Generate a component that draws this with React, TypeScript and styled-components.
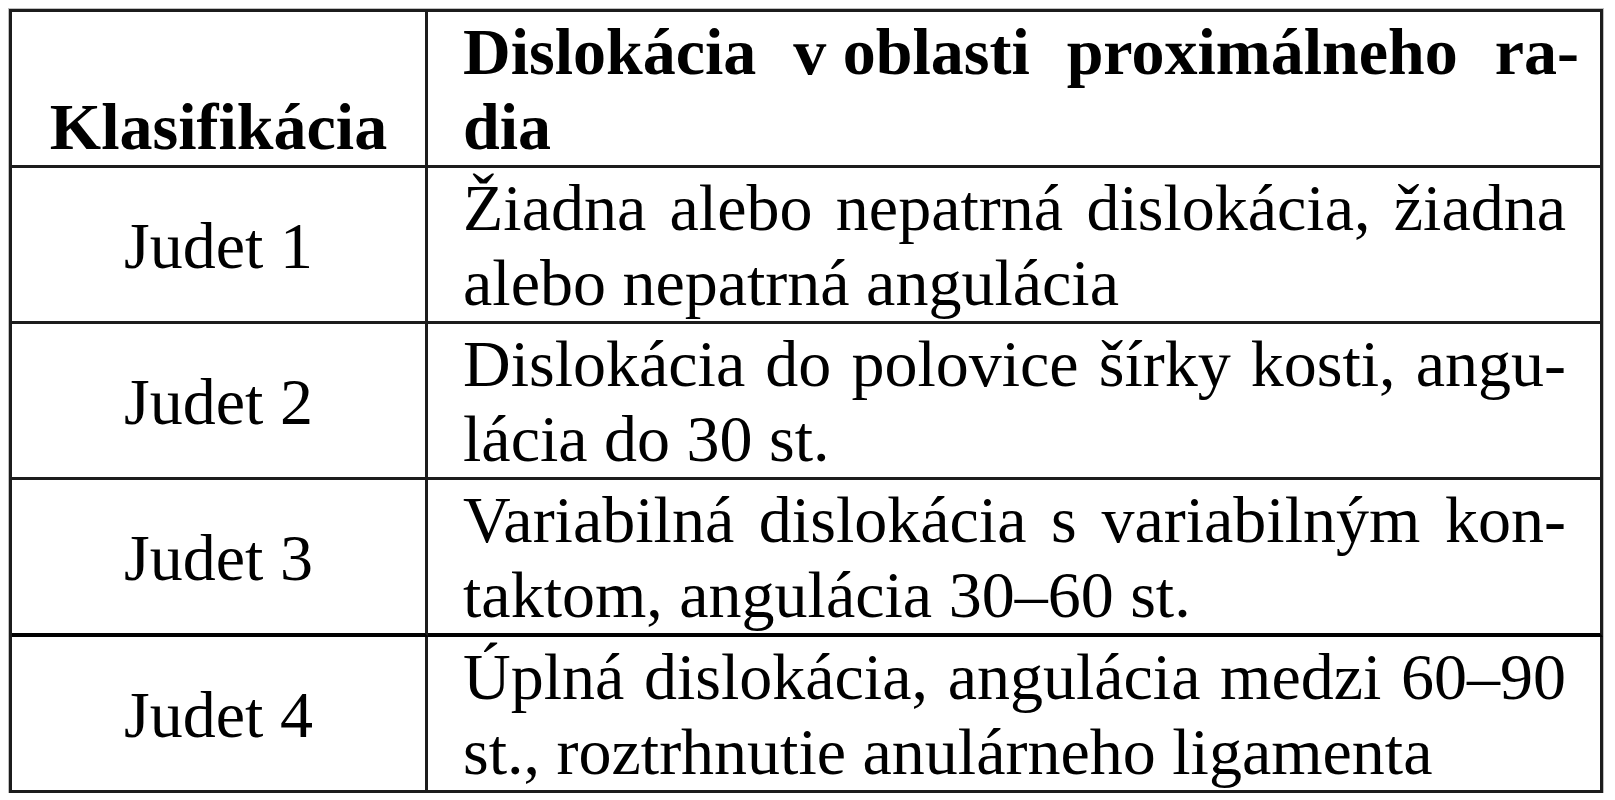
import React from 'react';
import styled, { createGlobalStyle } from 'styled-components';

const GlobalStyle = createGlobalStyle`
  html, body {
    margin: 0;
    padding: 0;
    background: #ffffff;
  }

  body {
    font-family: "Liberation Serif", "Times New Roman", serif;
    color: #000000;
  }
`;

// each line of the right column is given as its words; a line that is
// stretched to the full width is marked with justify
type Line = { words: string[]; justify?: boolean; overhang?: number };

const header: Line[] = [
  { words: ['Dislokácia', 'v oblasti', 'proximálneho', 'ra-'], justify: true, overhang: 13 },
  { words: ['dia'] },
];

const rows: Array<{
  label: string;
  lines: Line[];
}> = [
  {
    label: 'Judet 1',
    lines: [
      { words: ['Žiadna', 'alebo', 'nepatrná', 'dislokácia,', 'žiadna'], justify: true },
      { words: ['alebo nepatrná angulácia'] },
    ],
  },
  {
    label: 'Judet 2',
    lines: [
      { words: ['Dislokácia', 'do', 'polovice', 'šírky', 'kosti,', 'angu-'], justify: true },
      { words: ['lácia do 30 st.'] },
    ],
  },
  {
    label: 'Judet 3',
    lines: [
      { words: ['Variabilná', 'dislokácia', 's', 'variabilným', 'kon-'], justify: true },
      { words: ['taktom, angulácia 30–60 st.'] },
    ],
  },
  {
    label: 'Judet 4',
    lines: [
      { words: ['Úplná', 'dislokácia,', 'angulácia', 'medzi', '60–90'], justify: true },
      { words: ['st., roztrhnutie anulárneho ligamenta'] },
    ],
  },
];

const renderLines = (lines: Line[]) =>
  lines.map((line) => (
    <TextLine key={line.words.join(' ')} $justify={line.justify} $overhang={line.overhang ?? 0}>
      {line.words.map((word) => (
        <Word key={word}>{word}</Word>
      ))}
    </TextLine>
  ));

const App: React.FC = () => (
  <>
    <GlobalStyle />
    <Page>
      <Table>
        <LabelCell $align="flex-end" $bold>
          Klasifikácia
        </LabelCell>
        <TextCell $bold>{renderLines(header)}</TextCell>
        {rows.map((row, i) => (
          <React.Fragment key={row.label}>
            <LabelCell $align="center" $thick={i === 2}>
              {row.label}
            </LabelCell>
            <TextCell $thick={i === 2}>{renderLines(row.lines)}</TextCell>
          </React.Fragment>
        ))}
      </Table>
    </Page>
  </>
);

const Page = styled.div`
  padding: 9px 0 0 9px;
`;

const Table = styled.div`
  display: grid;
  grid-template-columns: 416px 1175px;
  width: max-content;
  border-top: 3px solid #1c1c1c;
  border-left: 3px solid #1c1c1c;
  box-shadow: 0 0 0 1px rgba(0, 0, 0, 0.25);
`;

const Cell = styled.div<{ $bold?: boolean; $thick?: boolean }>`
  border-right: 3px solid #1c1c1c;
  border-bottom: ${({ $thick }) => ($thick ? '4px solid #000000' : '3px solid #1c1c1c')};
  padding: 2px 0 1px;
  font-size: 66px;
  line-height: 75px;
  font-weight: ${({ $bold }) => ($bold ? 700 : 400)};
`;

const LabelCell = styled(Cell)<{ $align: string }>`
  display: flex;
  align-items: ${({ $align }) => $align};
  justify-content: center;
`;

const TextCell = styled(Cell)`
  padding-left: 35px;
  padding-right: 34px;
`;

const TextLine = styled.div<{ $justify?: boolean; $overhang: number }>`
  display: flex;
  justify-content: ${({ $justify }) => ($justify ? 'space-between' : 'flex-start')};
  margin-right: ${({ $overhang }) => -$overhang}px;
  white-space: pre;
`;

const Word = styled.span``;

export default App;
